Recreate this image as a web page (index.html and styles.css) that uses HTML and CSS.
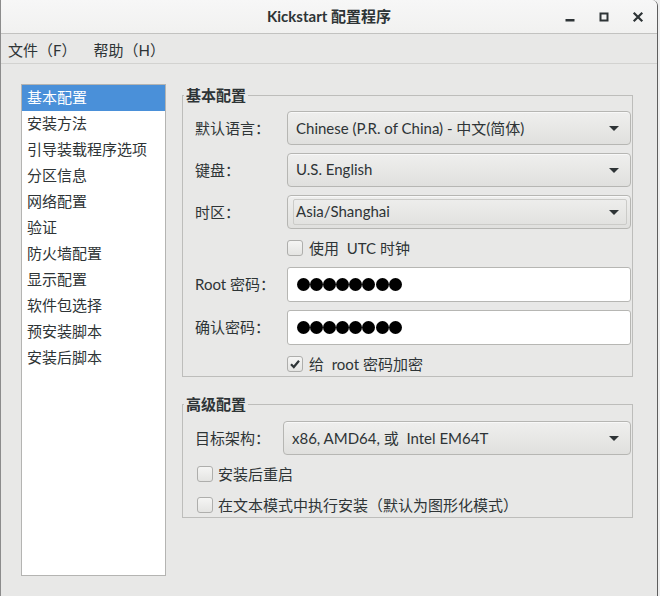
FILE: index.html
```html
<!DOCTYPE html>
<html lang="zh-CN">
<head>
<meta charset="utf-8">
<title>Kickstart 配置程序</title>
<link rel="stylesheet" href="styles.css">
</head>
<body>
<div class="window">
  <header class="titlebar">
    <div class="title">Kickstart 配置程序</div>
    <div class="controls">
      <span class="wbtn"><svg width="16" height="16" viewBox="0 0 16 16"><rect x="3.5" y="10" width="9" height="2.5" fill="#2e3436"/></svg></span>
      <span class="wbtn"><svg width="16" height="16" viewBox="0 0 16 16"><rect x="4.5" y="4.5" width="7" height="7" fill="none" stroke="#2e3436" stroke-width="2"/></svg></span>
      <span class="wbtn"><svg width="16" height="16" viewBox="0 0 16 16"><path d="M4.5 4.5 L11.5 11.5 M11.5 4.5 L4.5 11.5" stroke="#2e3436" stroke-width="2.2" stroke-linecap="square"/></svg></span>
    </div>
  </header>
  <nav class="menubar">
    <span class="menu-item">文件（F）</span>
    <span class="menu-item">帮助（H）</span>
  </nav>
  <div class="content">
    <ul class="sidebar">
      <li class="selected">基本配置</li>
      <li>安装方法</li>
      <li>引导装载程序选项</li>
      <li>分区信息</li>
      <li>网络配置</li>
      <li>验证</li>
      <li>防火墙配置</li>
      <li>显示配置</li>
      <li>软件包选择</li>
      <li>预安装脚本</li>
      <li>安装后脚本</li>
    </ul>
    <div class="main">
      <fieldset class="frame frame-basic">
        <legend>基本配置</legend>
        <div class="frame-body">
          <div class="row">
            <span class="label">默认语言<span class="colon">：</span></span>
            <div class="combo"><span class="combo-text">Chinese (P.R. of China) - 中文(简体)</span><span class="arrow"></span></div>
          </div>
          <div class="row">
            <span class="label">键盘<span class="colon">：</span></span>
            <div class="combo"><span class="combo-text">U.S. English</span><span class="arrow"></span></div>
          </div>
          <div class="row">
            <span class="label">时区<span class="colon">：</span></span>
            <div class="combo combo-entry"><span class="inner-entry">Asia/Shanghai</span><span class="arrow"></span></div>
          </div>
          <div class="row row-check">
            <span class="label"></span>
            <label class="check"><span class="box"></span><span class="check-text">使用&nbsp; UTC 时钟</span></label>
          </div>
          <div class="row">
            <span class="label">Root 密码<span class="colon">：</span></span>
            <div class="entry"><span class="dots"><i></i><i></i><i></i><i></i><i></i><i></i><i></i><i></i></span></div>
          </div>
          <div class="row">
            <span class="label">确认密码<span class="colon">：</span></span>
            <div class="entry"><span class="dots"><i></i><i></i><i></i><i></i><i></i><i></i><i></i><i></i></span></div>
          </div>
          <div class="row row-check row-last">
            <span class="label"></span>
            <label class="check"><span class="box checked"><svg width="14" height="14" viewBox="0 0 14 14"><path d="M3 7.2 L5.8 10 L11 3.8" fill="none" stroke="#2e3436" stroke-width="2.2"/></svg></span><span class="check-text">给&nbsp; root 密码加密</span></label>
          </div>
        </div>
      </fieldset>
      <fieldset class="frame frame-adv">
        <legend>高级配置</legend>
        <div class="frame-body frame-body-adv">
          <div class="row row-adv">
            <span class="label">目标架构<span class="colon">：</span></span>
            <div class="combo"><span class="combo-text">x86, AMD64, 或&nbsp; Intel EM64T</span><span class="arrow"></span></div>
          </div>
          <label class="check check-adv check-first"><span class="box"></span><span class="check-text">安装后重启</span></label>
          <label class="check check-adv check-second"><span class="box"></span><span class="check-text">在文本模式中执行安装（默认为图形化模式）</span></label>
        </div>
      </fieldset>
    </div>
  </div>
</div>
</body>
</html>
```
FILE: styles.css
```css
* { box-sizing: border-box; }
html, body { margin: 0; padding: 0; }
body {
  width: 660px;
  height: 596px;
  overflow: hidden;
  background: #efefef;
  font-family: "Lato", "Noto Sans CJK SC", sans-serif;
  font-size: 15px;
  color: #2e3436;
}
.window {
  width: 658px;
  height: 596px;
  border-left: 1px solid #8c8c8c;
  border-right: 1px solid #5e5e5e;
  border-top-right-radius: 6px;
  background: #e8e8e7;
  display: flex;
  flex-direction: column;
  overflow: hidden;
}
.titlebar {
  height: 34px;
  flex: none;
  border-bottom: 1px solid #c2c2c0;
  background: linear-gradient(#f7f7f7, #f1f1f0);
  display: grid;
  grid-template-columns: 1fr auto 1fr;
  align-items: center;
}
.title {
  grid-column: 2;
  font-weight: 700;
  font-size: 15px;
  line-height: 20px;
  padding-bottom: 1px;
}
.controls {
  grid-column: 3;
  justify-self: end;
  display: flex;
  padding-right: 2px;
}
.wbtn {
  width: 34px;
  height: 33px;
  display: flex;
  align-items: center;
  justify-content: center;
}
.menubar {
  height: 30px;
  flex: none;
  border-bottom: 1px solid #d2d2d0;
  display: flex;
  align-items: center;
  gap: 17px;
  padding-left: 7px;
  padding-top: 2px;
}
.menu-item { line-height: 20px; }
.content {
  display: flex;
  gap: 16px;
  padding: 20px 0 0 20px;
}
.sidebar {
  list-style: none;
  margin: 0;
  padding: 0;
  width: 145px;
  height: 492px;
  flex: none;
  background: #ffffff;
  border: 1px solid #b4b4b2;
}
.sidebar li {
  height: 26px;
  line-height: 25px;
  padding-left: 5px;
  white-space: nowrap;
}
.sidebar li.selected {
  background: #4a90d9;
  color: #ffffff;
}
.main {
  width: 451px;
  flex: none;
}
.frame {
  margin: 0;
  padding: 0;
  min-width: 0;
  border: 1px solid #bdbdbb;
}
.frame-basic { margin-top: 1px; }
.frame-adv { margin-top: 17px; }
.frame legend {
  font-weight: 700;
  line-height: 20px;
  padding: 0 2px;
  margin-left: 1px;
}
.frame-body {
  display: flex;
  flex-direction: column;
  gap: 8px;
  padding: 6px 1px 4px 12px;
}
.frame-body-adv { padding-top: 7px; }
.row {
  display: grid;
  grid-template-columns: 92px 1fr;
  align-items: center;
}
.row-adv { grid-template-columns: 88px 1fr; }
.row-check { margin: 3px 0; }
.row-last { margin: 3px 0 0 0; }
.label { white-space: nowrap; padding-bottom: 2px; }
.colon { font-family: "Noto Sans CJK TC", sans-serif; }
.combo {
  height: 34px;
  border: 1px solid #b6b6b3;
  border-radius: 4px;
  background: linear-gradient(#efefee, #e0e0de);
  box-shadow: inset 0 1px 0 #f8f8f8;
  display: flex;
  align-items: center;
  padding: 0 11px 0 8px;
}
.combo-text { flex: 1; white-space: nowrap; padding-bottom: 2px; }
.combo-entry { padding-left: 5px; padding-right: 11px; }
.inner-entry {
  flex: 1;
  height: 26px;
  border: 1px solid #cbcbc8;
  border-radius: 2px;
  display: flex;
  align-items: center;
  padding: 0 0 2px 2px;
  margin-right: 1px;
}
.combo-entry .arrow { margin-left: -19px; }
.arrow {
  width: 0;
  height: 0;
  border-left: 5px solid transparent;
  border-right: 5px solid transparent;
  border-top: 5px solid #2e3436;
  flex: none;
}
.entry {
  height: 35px;
  background: #ffffff;
  border: 1px solid #b6b6b3;
  border-radius: 3px;
  display: flex;
  align-items: center;
  padding-left: 9px;
}
.dots { display: flex; }
.dots i {
  width: 13px;
  height: 13px;
  border-radius: 50%;
  background: #000000;
  margin-right: 0.1px;
}
.check {
  display: flex;
  align-items: center;
  gap: 6px;
  height: 16px;
  white-space: nowrap;
}
.check-text { padding-bottom: 2px; }
.box {
  width: 16px;
  height: 16px;
  flex: none;
  border: 1px solid #aeaeac;
  border-radius: 3px;
  background: linear-gradient(#f5f5f4, #e4e4e2);
  display: flex;
  align-items: center;
  justify-content: center;
}
.check-adv { padding-left: 2px; gap: 5px; }
.check-first { margin-top: 3px; }
.check-second { margin-top: 7px; }
```
